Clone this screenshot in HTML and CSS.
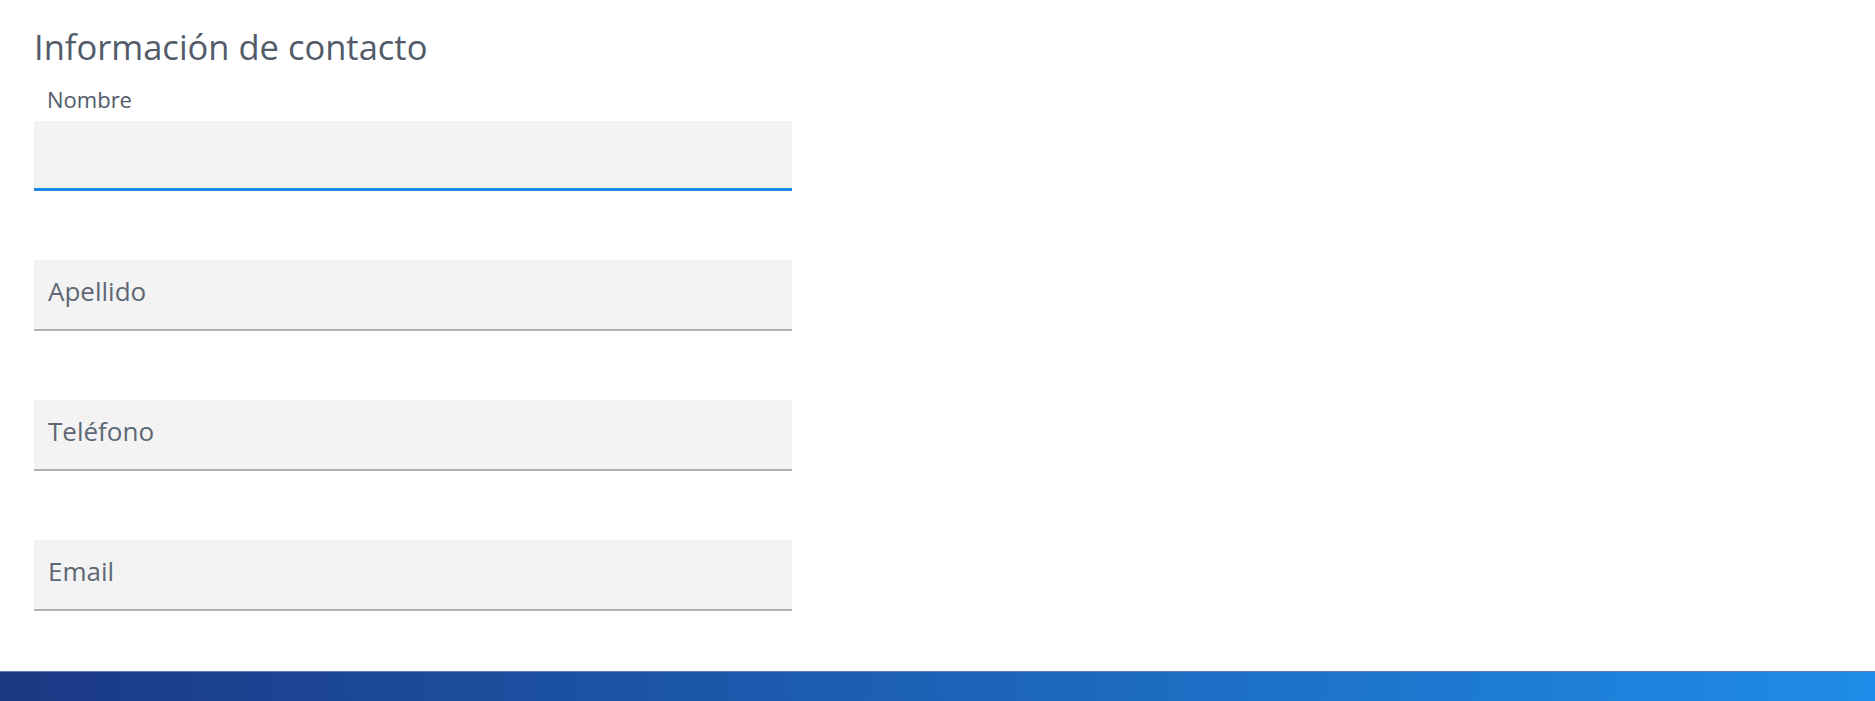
FILE: index.html
```html
<!DOCTYPE html>
<html lang="es">
<head>
    <meta charset="UTF-8">
    <meta name="viewport" content="width=device-width, initial-scale=1.0">
    <title>Información de contacto</title>
    <link rel="stylesheet" href="styles.css">
</head>
<body>
    <main class="page">
        <form class="contact-form" id="contactForm">
            <h2 class="form-title">Información de contacto</h2>

            <div class="field active">
                <input type="text" id="nombre" placeholder=" ">
                <label for="nombre">Nombre</label>
            </div>

            <div class="field">
                <input type="text" id="apellido" placeholder=" ">
                <label for="apellido">Apellido</label>
            </div>

            <div class="field">
                <input type="tel" id="telefono" placeholder=" ">
                <label for="telefono">Teléfono</label>
            </div>

            <div class="field">
                <input type="email" id="email" placeholder=" ">
                <label for="email">Email</label>
            </div>
        </form>
    </main>

    <footer class="footer-bar"></footer>
</body>
</html>
```

FILE: styles.css
```css
* {
    margin: 0;
    padding: 0;
    box-sizing: border-box;
}

body {
    font-family: 'Open Sans', 'Noto Sans', sans-serif;
    background: #fff;
    color: #505a69;
    min-height: 100vh;
    display: flex;
    flex-direction: column;
}

.page {
    flex: 1;
}

.contact-form {
    width: 792px;
    padding: 27px 0 0 34px;
}

.form-title {
    font-size: 34.5px;
    line-height: 40px;
    font-weight: 400;
    color: #525b69;
    margin-bottom: 54px;
}

.field {
    position: relative;
}

.field + .field {
    margin-top: 69px;
}

.field input {
    display: block;
    width: 100%;
    height: 71px;
    border: none;
    border-bottom: 2px solid #b1b1b1;
    background: #f3f3f3;
    padding: 14px 14px 0;
    font-family: inherit;
    font-size: 26px;
    color: #505a69;
    outline: none;
}

/* label sits inside the input until the field is active */
.field label {
    position: absolute;
    left: 14px;
    top: 16px;
    font-size: 26px;
    line-height: 30px;
    color: #5e6775;
    pointer-events: none;
}

.field.active input,
.field input:focus {
    height: 70px;
    border-bottom: 3px solid #1e88e5;
}

.field.active label,
.field input:focus + label,
.field input:not(:placeholder-shown) + label {
    left: 13px;
    top: -35px;
    font-size: 22px;
    line-height: 26px;
    color: #505a69;
}

.footer-bar {
    height: 30px;
    border-top: 1px solid #5f7fb8;
    background: linear-gradient(90deg, #1b3783 0%, #1d77cf 75%, #1e8ce8 100%);
}
```
